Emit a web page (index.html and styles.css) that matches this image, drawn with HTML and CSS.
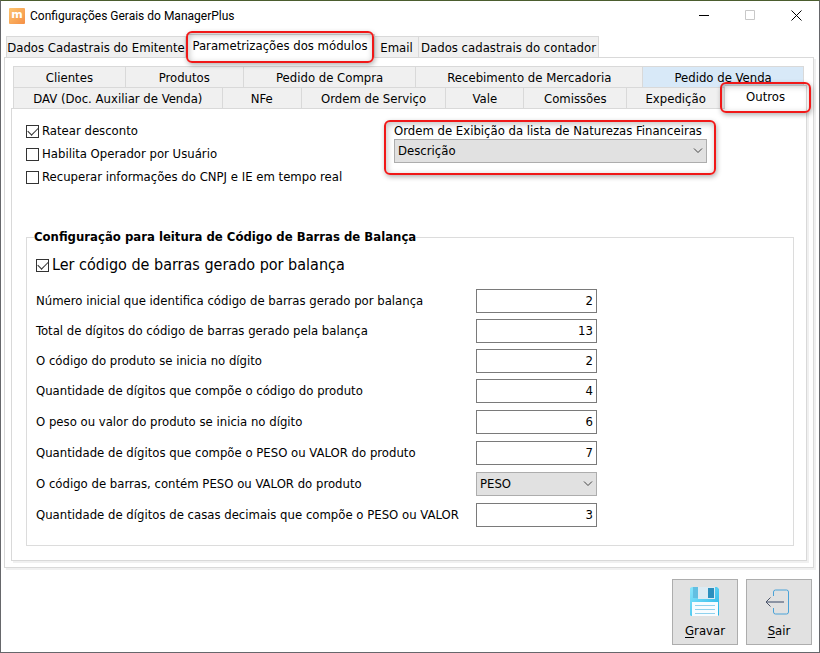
FILE: index.html
```html
<!DOCTYPE html>
<html lang="pt-BR">
<head>
	<meta charset="UTF-8"/>
	<meta name="viewport" content="width=device-width, initial-scale=1"/>
	<title>Configurações Gerais do ManagerPlus</title>
	<link rel="stylesheet" href="styles.css">
</head>
<body>
<div class="window">

	<header class="titlebar">
		<span class="app-icon" aria-hidden="true">m</span>
		<h1>Configurações Gerais do ManagerPlus</h1>
		<div class="window-buttons">
			<button type="button" aria-label="Minimizar">
				<svg width="11" height="11" viewBox="0 0 11 11"><path d="M0 5.5h10" stroke="#000"/></svg>
			</button>
			<button type="button" aria-label="Maximizar" disabled>
				<svg width="11" height="11" viewBox="0 0 11 11"><path d="M.5 .5h9v9h-9z" fill="none" stroke="#c8c8c8"/></svg>
			</button>
			<button type="button" aria-label="Fechar">
				<svg width="11" height="11" viewBox="0 0 11 11"><path d="M.5 .5l10 10M10.500 .5l-10 10" fill="none" stroke="#000"/></svg>
			</button>
		</div>
	</header>

	<nav class="tabs main-tabs" role="tablist" aria-label="Configurações">
		<button type="button" role="tab">Dados Cadastrais do Emitente</button>
		<button type="button" role="tab" class="active callout" aria-selected="true">Parametrizações dos módulos</button>
		<button type="button" role="tab">Email</button>
		<button type="button" role="tab">Dados cadastrais do contador</button>
	</nav>

	<main class="page">
		<nav class="module-tabs" role="tablist" aria-label="Módulos">
			<div class="tabs row-one">
				<button type="button" role="tab">Clientes</button>
				<button type="button" role="tab">Produtos</button>
				<button type="button" role="tab">Pedido de Compra</button>
				<button type="button" role="tab">Recebimento de Mercadoria</button>
				<button type="button" role="tab" class="hot">Pedido de Venda</button>
			</div>
			<div class="tabs row-two">
				<button type="button" role="tab">DAV (Doc. Auxiliar de Venda)</button>
				<button type="button" role="tab">NFe</button>
				<button type="button" role="tab">Ordem de Serviço</button>
				<button type="button" role="tab">Vale</button>
				<button type="button" role="tab">Comissões</button>
				<button type="button" role="tab">Expedição</button>
				<button type="button" role="tab" class="active callout" aria-selected="true">Outros</button>
			</div>
		</nav>

		<section class="page module">
			<div class="options">
				<div class="checks">
					<label class="check"><input type="checkbox" checked/>Ratear desconto</label>
					<label class="check"><input type="checkbox"/>Habilita Operador por Usuário</label>
					<label class="check"><input type="checkbox"/>Recuperar informações do CNPJ e IE em tempo real</label>
				</div>
				<div class="order callout">
					<label for="order">Ordem de Exibição da lista de Naturezas Financeiras</label>
					<select id="order">
						<option>Descrição</option>
					</select>
				</div>
			</div>

			<fieldset>
				<legend>Configuração para leitura de Código de Barras de Balança</legend>
				<label class="check large"><input type="checkbox" checked/>Ler código de barras gerado por balança</label>

				<div class="fields">
					<label for="initial">Número inicial que identifica código de barras gerado por balança</label>
					<input type="text" id="initial" value="2"/>
					<label for="total">Total de dígitos do código de barras gerado pela balança</label>
					<input type="text" id="total" value="13"/>
					<label for="code-start">O código do produto se inicia no dígito</label>
					<input type="text" id="code-start" value="2"/>
					<label for="code-digits">Quantidade de dígitos que compõe o código do produto</label>
					<input type="text" id="code-digits" value="4"/>
				</div>
				<div class="fields weight">
					<label for="weight-start">O peso ou valor do produto se inicia no dígito</label>
					<input type="text" id="weight-start" value="6"/>
					<label for="weight-digits">Quantidade de dígitos que compõe o PESO ou VALOR do produto</label>
					<input type="text" id="weight-digits" value="7"/>
					<label for="weight-type">O código de barras, contém PESO ou VALOR do produto</label>
					<select id="weight-type">
						<option>PESO</option>
						<option>VALOR</option>
					</select>
					<label for="decimals">Quantidade de dígitos de casas decimais que compõe o PESO ou VALOR</label>
					<input type="text" id="decimals" value="3"/>
				</div>
			</fieldset>
		</section>
	</main>

	<footer class="actions">
		<button type="button" accesskey="g">
			<svg width="32" height="32" viewBox="0 0 32 32" aria-hidden="true">
				<defs>
					<linearGradient id="disk" x1="0" y1="0" x2="1" y2="1">
						<stop offset="0" stop-color="#8be6fc"/>
						<stop offset="1" stop-color="#1fb2e6"/>
					</linearGradient>
				</defs>
				<path d="M3 1h25l2 2v26l-1 1H2l-1-1V2z" fill="url(#disk)"/>
				<path d="M4 1h5v11H4z" fill="#62bfe2"/>
				<path d="M9 1h17v12H9z" fill="#dcebf3"/>
				<path d="M19 2h6v10h-6z" fill="#2b8fbe"/>
				<path d="M3 16h26v14H3z" fill="#f7fcff"/>
				<path d="M6 19.500h20M6 23.500h20M6 27.500h20" stroke="#8fd2ee"/>
			</svg>
			<span><u>G</u>ravar</span>
		</button>
		<button type="button" accesskey="s">
			<svg width="32" height="32" viewBox="0 0 32 32" aria-hidden="true">
				<path d="M10.500 10V6q0-2 2-2h11q2 0 2 2v20q0 2-2 2h-11q-2 0-2-2v-4" fill="none" stroke="#4aa3d8"/>
				<path d="M4 16h17" stroke="#8b93a3" stroke-width="2"/>
				<path d="M7.500 11.500L3 16L7.500 20.500" fill="none" stroke="#4b5468"/>
			</svg>
			<span><u>S</u>air</span>
		</button>
	</footer>

</div>
</body>
</html>
```

FILE: styles.css
```css
* {
    box-sizing: border-box;
}

body {
    margin: 0;
    font-family: "DejaVu Sans Condensed", "DejaVu Sans", sans-serif;
    font-size: 13px;
    line-height: 16px;
    color: #000;
    background: #fff;
}

button, input, select {
    font: inherit;
    color: inherit;
    border-radius: 0;
}

.window {
    display: flex;
    flex-direction: column;
    min-height: 100vh;
    border: 1px solid #66676b;
    border-top-color: #4b5d2e;
}

/* Title bar */
.titlebar {
    display: flex;
    align-items: center;
    height: 29px;
    padding-left: 8px;
}

.app-icon {
    width: 16px;
    height: 16px;
    border-radius: 1px;
    background: linear-gradient(135deg, #fdc56f, #f58f45);
    color: #fff;
    font: bold 11px/14px "DejaVu Sans", sans-serif;
    text-align: center;
}

h1 {
    flex: 1;
    margin: 0 0 0 5px;
    font: 12px/16px Roboto, sans-serif;
}

.window-buttons {
    display: flex;
}

.window-buttons button {
    display: flex;
    align-items: center;
    justify-content: center;
    width: 46px;
    height: 28px;
    padding: 0;
    border: none;
    background: none;
}

/* Tabs */
.tabs {
    display: grid;
}

.tabs button {
    height: 21px;
    padding: 2px 0 0;
    border: 1px solid #d9d9d9;
    border-bottom: none;
    background: #f0f0f0;
    white-space: nowrap;
}

.tabs button + button {
    border-left: none;
}

.tabs .hot {
    background: #d8e9f8;
}

.tabs .active {
    height: 24px;
    margin-top: -2px;
    margin-bottom: -1px;
    padding-bottom: 3px;
    background: #fff;
}

.main-tabs {
    grid-template-columns: 180px 189px 44px 180px;
    padding: 6px 5px 0;
}

.module-tabs {
    padding-left: 2px;
}

.row-one {
    margin-right: 3px;
    grid-template-columns: 113fr 118fr 173fr 227fr 161fr;
}

.row-two {
    grid-template-columns: 210fr 79fr 145fr 78fr 103fr 98fr 82fr;
}

/* Red highlight drawn over the marked control */
.callout {
    position: relative;
}

.callout::after {
    content: "";
    position: absolute;
    inset: -4px -5px;
    border: 2px solid #f01818;
    border-radius: 6px;
    box-shadow: 1px 2px 5px rgba(0, 0, 0, 0.3), inset 1px 2px 6px rgba(0, 0, 0, 0.25);
    pointer-events: none;
}

.main-tabs .callout::after {
    inset: -4px 0 -5px;
}

/* Pages */
.page {
    border: 1px solid #d9d9d9;
    box-shadow: 2px 2px 0 #f0f0f0;
}

main.page {
    flex: 1;
    display: flex;
    flex-direction: column;
    margin: 0 5px 0 3px;
    padding: 8px 6px 6px;
}

.module {
    flex: 1;
    padding: 12px 12px 14px 14px;
}

.options {
    display: flex;
    justify-content: space-between;
    margin-bottom: 42px;
}

.checks {
    display: flex;
    flex-direction: column;
    gap: 3px;
}

.check {
    display: flex;
    align-items: center;
    gap: 3px;
    height: 20px;
}

.check input {
    appearance: none;
    display: grid;
    width: 13px;
    height: 13px;
    margin: 0;
    border: 1px solid #333;
    background: #fff;
}

.check input:checked::before {
    content: "";
    place-self: center;
    width: 9px;
    height: 5px;
    margin-bottom: 3px;
    border: solid #333;
    border-width: 0 0 1px 1px;
    transform: rotate(-45deg);
}

.large {
    font-size: 16px;
}

.order {
    display: flex;
    flex-direction: column;
    width: 313px;
    height: 48px;
    margin-right: 87px;
    padding-top: 2px;
}

.order::after {
    inset: -1px -9px -6px -10px;
}

select {
    appearance: none;
    height: 24px;
    padding: 0 3px;
    border: 1px solid #adadad;
    background: #e1e1e1 url("data:image/svg+xml,%3Csvg xmlns='http://www.w3.org/2000/svg' width='10' height='6'%3E%3Cpath d='M1 .5l4 4 4-4' fill='none' stroke='%23444'/%3E%3C/svg%3E") no-repeat right 3px center;
}

fieldset {
    margin: 0;
    padding: 10px 9px 18px;
    border: 1px solid #dcdcdc;
}

legend {
    margin-left: -2px;
    padding: 0;
    font-weight: bold;
}

.fields {
    display: grid;
    grid-template-columns: 440px 121px;
    align-items: center;
    row-gap: 6px;
    margin-top: 14px;
}

.fields.weight {
    row-gap: 7px;
    margin-top: 7px;
}

.fields input {
    width: 100%;
    height: 24px;
    padding: 0 3px 2px;
    border: 1px solid #7a7a7a;
    text-align: right;
}

/* Bottom buttons */
.actions {
    display: flex;
    justify-content: flex-end;
    gap: 8px;
    padding: 11px 7px 7px;
}

.actions button {
    display: flex;
    flex-direction: column;
    align-items: center;
    justify-content: space-between;
    width: 66px;
    height: 66px;
    padding: 6px 0 5px;
    border: 1px solid #adadad;
    background: #e1e1e1;
}

.actions u {
    text-underline-offset: 2px;
}
```
